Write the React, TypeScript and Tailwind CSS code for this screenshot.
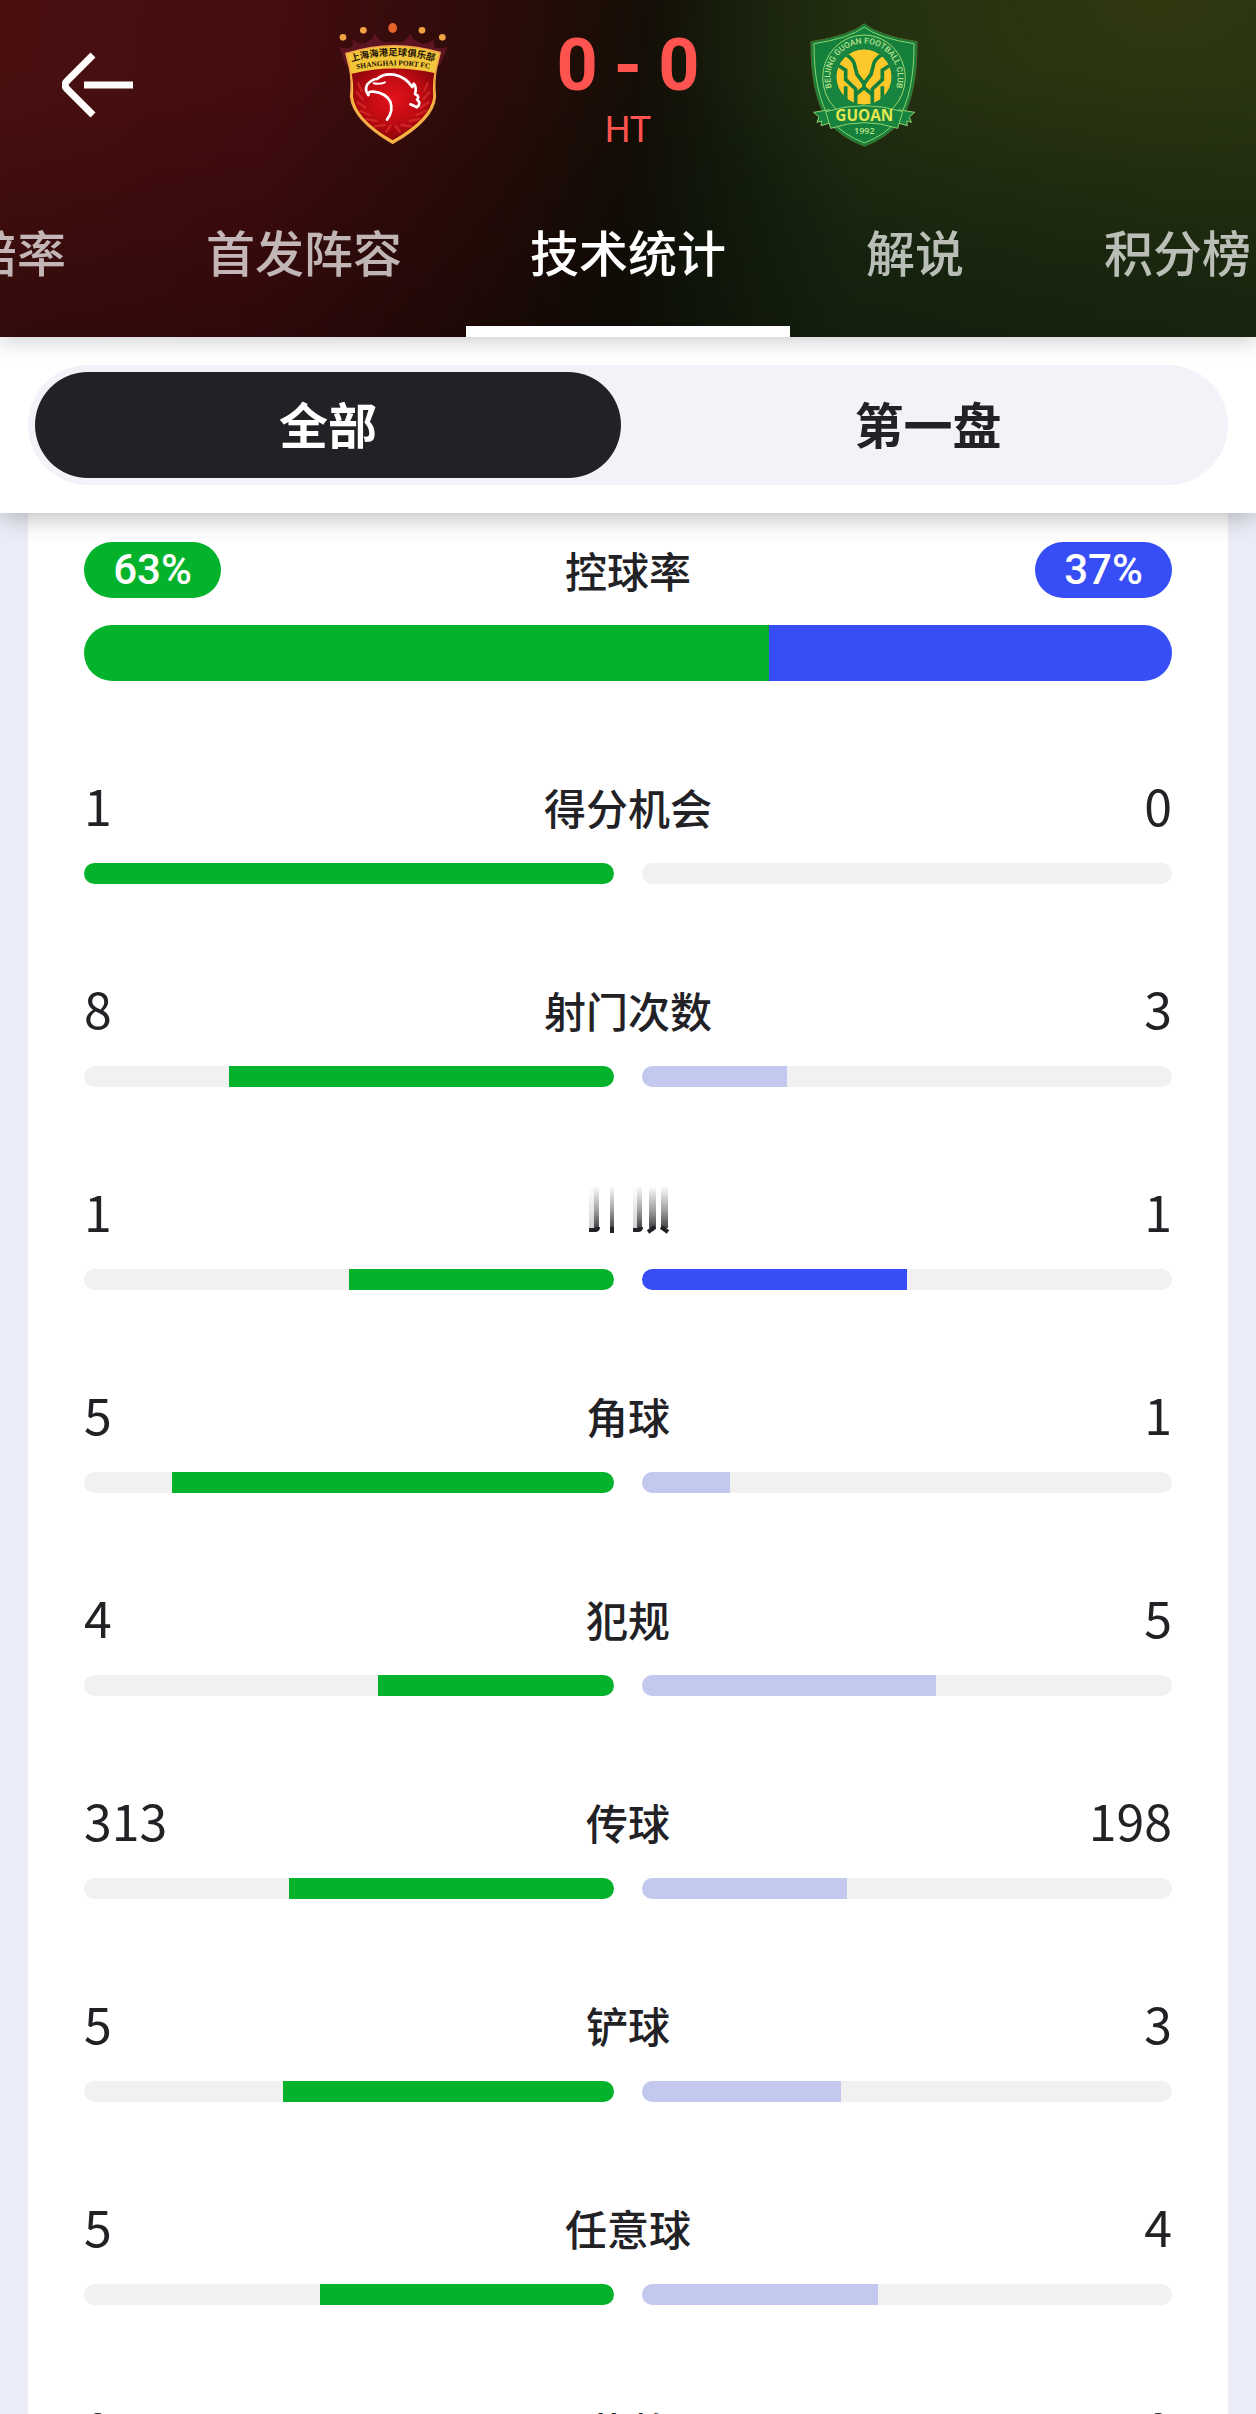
import { useLayoutEffect, useRef, useState } from "react";

const TABS = ["赔率", "首发阵容", "技术统计", "解说", "积分榜"];
const PERIODS = ["全部", "第一盘"];

type Stat = {
  label?: string;
  home: number;
  away: number;
};

const STATS: Stat[] = [
  { label: "得分机会", home: 1, away: 0 },
  { label: "射门次数", home: 8, away: 3 },
  { home: 1, away: 1 },
  { label: "角球", home: 5, away: 1 },
  { label: "犯规", home: 4, away: 5 },
  { label: "传球", home: 313, away: 198 },
  { label: "铲球", home: 5, away: 3 },
  { label: "任意球", home: 5, away: 4 },
  { label: "黄牌", home: 0, away: 0 },
];

export default function App() {
  const [tab, setTab] = useState("技术统计");
  const [period, setPeriod] = useState("全部");

  return (
    <div className="h-screen overflow-hidden bg-[#ebeef8] font-['Noto_Sans_CJK_SC',sans-serif] text-[#222226]">
      <header className="relative z-20 bg-[linear-gradient(to_bottom,transparent_20%,rgba(0,0,0,0.3)_100%),radial-gradient(ellipse_40%_90%_at_92%_0%,#2f370f_0%,transparent_100%),linear-gradient(98deg,#4a1010_0%,#440c0f_22%,#280c08_40%,#140e06_50%,#131c0c_57%,#1b2c12_68%,#203314_100%)] shadow-[0_4px_20px_rgba(0,0,0,0.2)]">
        <div className="grid h-[180px] grid-cols-[1fr_auto_1fr]">
          <div className="flex items-start justify-between pl-[62px]">
            <button type="button" aria-label="返回" className="mt-[52px]">
              <BackArrow />
            </button>
            <PortBadge />
          </div>
          <div className="mt-[30px] flex w-[360px] flex-col items-center font-['Roboto',sans-serif] text-[#ff5350]">
            <div className="flex items-center gap-4 text-[72px] leading-[72px] font-bold">
              <span>0</span>
              <span>-</span>
              <span>0</span>
            </div>
            <p className="mt-[6px] text-4xl leading-[44px]">HT</p>
          </div>
          <div className="flex items-start">
            <GuoanBadge />
          </div>
        </div>
        <TabBar active={tab} onSelect={setTab} />
      </header>

      <section className="relative z-10 bg-white p-7 shadow-[0_4px_24px_rgba(0,0,0,0.28)]">
        <div className="grid grid-cols-2 gap-[14px] rounded-full bg-[#f2f3f8] p-[7px]">
          {PERIODS.map((name) => (
            <button
              key={name}
              type="button"
              aria-pressed={period === name}
              onClick={() => setPeriod(name)}
              className={`h-[106px] rounded-full pb-1 text-[49px] leading-[72px] font-bold ${
                period === name ? "bg-[#222226] text-white" : "text-[#222226]"
              }`}
            >
              {name}
            </button>
          ))}
        </div>
      </section>

      <main className="mx-7 bg-white px-14 pt-[29px]">
        <Possession home={63} away={37} />
        {STATS.map((stat, index) => (
          <StatRow key={index} {...stat} />
        ))}
      </main>
    </div>
  );
}

function TabBar({ active, onSelect }: { active: string; onSelect: (tab: string) => void }) {
  const navRef = useRef<HTMLElement | null>(null);

  // keep the selected tab in the middle of the strip
  useLayoutEffect(() => {
    const nav = navRef.current;
    const current = nav?.querySelector<HTMLElement>("[aria-current='page']");
    if (!nav || !current) return;
    const navRect = nav.getBoundingClientRect();
    const rect = current.getBoundingClientRect();
    nav.scrollLeft += rect.left - navRect.left + rect.width / 2 - nav.clientWidth / 2;
  }, [active]);

  return (
    <nav ref={navRef} className="flex overflow-x-auto [scrollbar-width:none]">
      {TABS.map((name) => (
        <button
          key={name}
          type="button"
          aria-current={active === name ? "page" : undefined}
          onClick={() => onSelect(name)}
          className={`h-[157px] min-w-[250px] shrink-0 border-b-[11px] px-16 pb-1 text-[49px] leading-[72px] font-medium ${
            active === name ? "border-white text-white" : "border-transparent text-white/70"
          }`}
        >
          {name}
        </button>
      ))}
    </nav>
  );
}

function Possession({ home, away }: { home: number; away: number }) {
  return (
    <div className="mb-[98px]">
      <div className="flex items-center justify-between">
        <span className="w-[137px] rounded-full bg-[#04b32b] text-center font-['Roboto',sans-serif] text-[42px] leading-[56px] font-medium text-white">
          {home}%
        </span>
        <h2 className="text-[42px] leading-[56px] font-medium">控球率</h2>
        <span className="w-[137px] rounded-full bg-[#374df5] text-center font-['Roboto',sans-serif] text-[42px] leading-[56px] font-medium text-white">
          {away}%
        </span>
      </div>
      <div className="mt-[27px] flex h-14 overflow-hidden rounded-full">
        <div className="bg-[#04b32b]" style={{ width: `${home}%` }} />
        <div className="flex-1 bg-[#374df5]" />
      </div>
    </div>
  );
}

function StatRow({ label, home, away }: Stat) {
  const total = home + away || 1;

  return (
    <div className="mb-[98px]">
      <div className="grid h-14 grid-cols-[1fr_auto_1fr] items-start">
        <span className="text-[50px] leading-[50px]">{home}</span>
        {label ? <h2 className="text-[42px] leading-[56px] font-medium">{label}</h2> : <ScrollingTitle />}
        <span className="text-right text-[50px] leading-[50px]">{away}</span>
      </div>
      <div className="mt-7 grid grid-cols-2 gap-7">
        <div className="flex h-[21px] justify-end overflow-hidden rounded-full bg-[#f1f1f1]">
          <div className="bg-[#04b32b]" style={{ width: `${(home / total) * 100}%` }} />
        </div>
        <div className="flex h-[21px] overflow-hidden rounded-full bg-[#f1f1f1]">
          <div
            className={away === home ? "bg-[#374df5]" : "bg-[#c3c8ee]"}
            style={{ width: `${(away / total) * 100}%` }}
          />
        </div>
      </div>
    </div>
  );
}

// streaks left behind while a title moves past
function ScrollingTitle() {
  return (
    <svg width="168" height="56" viewBox="0 0 168 56" aria-hidden="true">
      <defs>
        <linearGradient id="streak" x1="0" y1="0" x2="0" y2="1">
          <stop offset="0" stopColor="#222226" stopOpacity="0" />
          <stop offset="0.6" stopColor="#222226" stopOpacity="0.45" />
          <stop offset="1" stopColor="#222226" stopOpacity="0.85" />
        </linearGradient>
      </defs>
      <g fill="url(#streak)">
        <path d="M50 1h5v42h-5zM66 1h4v42h-4zM93 1h5v42h-5zM105 1h7v42h-7zM117 1h7v42h-7z" />
        <path d="M45 1h5v42h-5zM89 1h4v42h-4z" opacity="0.25" />
      </g>
      <path
        d="M45 45h6q3 0 3-3M68 42v6M89 45h5q3 0 3-3M104 47l7-5M117 42l7 5"
        fill="none"
        stroke="#222226"
        strokeWidth="4"
      />
    </svg>
  );
}

function BackArrow() {
  return (
    <svg width="72" height="74" viewBox="0 0 72 74" fill="none" stroke="white" strokeWidth="7">
      <path d="M31 3 5 29q-4 4 0 8l26 26M22 33h49" />
    </svg>
  );
}

function PortBadge() {
  return (
    <svg width="110" height="125" viewBox="39 21 330 375" className="mt-[22px]" role="img">
      <defs>
        <radialGradient id="port-red" cx="0.5" cy="0.42" r="0.6">
          <stop offset="0" stopColor="#e3121b" />
          <stop offset="0.6" stopColor="#bb0a12" />
          <stop offset="1" stopColor="#860509" />
        </radialGradient>
        <path id="port-arc-top" d="M72 143Q203 101 336 141" />
        <path id="port-arc-bottom" d="M76 167Q203 136 334 165" />
      </defs>
      <path
        d="M42 95 62 150H345L368 95Q345 104 328 95L325 72Q308 90 285 84 262 75 255 54 245 80 225 82H180Q160 80 150 54 143 75 122 84 98 90 84 72L82 95Q65 104 42 95Z"
        fill="#5c1422"
      />
      <g fill="#f0a343">
        <circle cx="54" cy="67" r="10" />
        <circle cx="115" cy="46" r="10" />
        <circle cx="291" cy="46" r="10" />
        <circle cx="352" cy="67" r="10" />
      </g>
      <ellipse cx="203" cy="39" rx="13" ry="15" fill="#e5622a" />
      <path
        d="M63 116Q203 70 345 113L334 160Q326 200 331 245 326 315 203 385 84 315 77 245 82 200 74 160Z"
        fill="#f2c53a"
        stroke="#f7a54a"
        strokeWidth="5"
      />
      <path d="M80 176Q203 146 328 174 322 205 325 245 318 310 203 376 92 312 84 245 86 205 80 176Z" fill="url(#port-red)" />
      <g fill="none" stroke="#e83a34" strokeWidth="7" strokeLinecap="round" opacity="0.55">
        <path d="M100 205l10 22M95 232l18 20M97 262l24 16M106 288l28 12M124 312l30 6M150 334l28-4M184 350l12-18" />
        <path d="M308 205l-10 22M313 232l-18 20M311 262l-24 16M302 288l-28 12M284 312l-30 6M258 334l-28-4M224 350l-12-18" />
      </g>
      <g fill="none" stroke="white" strokeWidth="8" strokeLinejoin="round" strokeLinecap="round">
        <path d="M130 240Q118 224 127 208 142 192 156 192 176 174 207 179 242 186 262 216L266 206Q276 214 270 237 286 244 276 254 290 264 276 277L256 268" />
        <path d="M130 240Q128 228 146 230 182 234 196 260 206 288 186 314" />
        <path d="M146 205q18 4 34-3" strokeWidth="6" />
      </g>
      <text fontFamily="Noto Sans CJK SC, sans-serif" fontSize="28" fontWeight="700" fill="#241408" textAnchor="middle">
        <textPath href="#port-arc-top" startOffset="50%">
          上海海港足球俱乐部
        </textPath>
      </text>
      <text fontFamily="Liberation Serif, serif" fontSize="22" fontWeight="700" fill="#241408" textAnchor="middle">
        <textPath href="#port-arc-bottom" startOffset="50%">
          SHANGHAI PORT FC
        </textPath>
      </text>
    </svg>
  );
}

function GuoanBadge() {
  return (
    <svg width="110" height="125" viewBox="39 21 330 375" className="mt-[22px]" role="img">
      <defs>
        <clipPath id="guoan-ball">
          <circle cx="207" cy="186" r="83" />
        </clipPath>
        <path id="guoan-ring" d="M123 243A101 101 0 1 1 291 243" />
      </defs>
      <path
        d="M208 26Q250 62 366 80 368 240 314 322 275 368 208 394 140 368 101 322 46 240 48 80 165 62 208 26Z"
        fill="#14803c"
        stroke="#4d6f2a"
        strokeWidth="3"
      />
      <path
        d="M208 36Q252 70 357 86 358 238 307 316 270 360 208 384 146 360 108 316 56 238 57 86 163 70 208 36Z"
        fill="none"
        stroke="#8fd16a"
        strokeWidth="3"
      />
      <ellipse cx="207" cy="188" rx="124" ry="128" fill="#178540" stroke="#9fd672" strokeWidth="3" />
      <g clipPath="url(#guoan-ball)">
        <circle cx="207" cy="186" r="83" fill="#fdc92a" />
        <g fill="none" stroke="#14803c" strokeWidth="11">
          <path d="M148 116Q178 132 180 156L186 178 207 206 228 178 234 156Q236 132 266 116" />
          <path d="M122 146 152 166V194L182 222V272M292 146 262 166V194L232 222V272" />
          <path d="M207 200v18L180 240M207 218l27 22M152 272V214M262 272V214" />
        </g>
      </g>
      <text fontFamily="Roboto, sans-serif" fontSize="25" fontWeight="500" fill="#b9e08a" textAnchor="middle">
        <textPath href="#guoan-ring" startOffset="50%">
          BEIJING GUOAN FOOTBALL CLUB
        </textPath>
      </text>
      <g fill="#17853f" stroke="#8fd16a" strokeWidth="3" strokeLinejoin="round">
        <path d="M56 292 104 284 112 322 78 332 80 318 66 322 72 306Z" />
        <path d="M359 292 311 284 303 322 337 332 335 318 349 322 343 306Z" />
        <path d="M92 290Q208 254 323 290L308 340Q208 306 107 340Z" />
      </g>
      <text x="208" y="317" fontFamily="Open Sans, sans-serif" fontSize="46" fontWeight="700" fill="#e4e84f" textAnchor="middle">
        GUOAN
      </text>
      <text x="208" y="356" fontFamily="Open Sans, sans-serif" fontSize="27" fontWeight="600" fill="#b9e08a" textAnchor="middle">
        1992
      </text>
    </svg>
  );
}
